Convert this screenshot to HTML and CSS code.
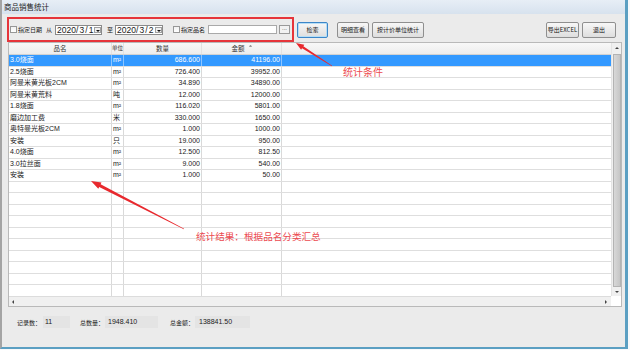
FILE: index.html
```html
<!DOCTYPE html>
<html lang="zh-CN">
<head>
    <meta charset="UTF-8">
    <title>商品销售统计</title>
    <link rel="stylesheet" href="styles.css">
</head>
<body>
<div class="screen">
    <div class="window">
        <div class="titlebar">商品销售统计</div>
        <div class="content">
            <!-- 查询条件 -->
            <div class="toolbar">
                <div class="filter">
                    <span class="check"></span>
                    <span class="lbl l1">指定日期</span>
                    <span class="lbl l2">从</span>
                    <div class="combo c1"><span class="combo-text">2020/ 3 / 1</span><span class="combo-btn"></span></div>
                    <span class="lbl l3">至</span>
                    <div class="combo c2"><span class="combo-text">2020/ 3 / 2</span><span class="combo-btn"></span></div>
                    <span class="check ch2"></span>
                    <span class="lbl l1">指定品名</span>
                    <span class="textbox"></span>
                    <span class="dots">...</span>
                </div>
                <button class="btn default b-search">检索</button>
                <button class="btn b-detail">明细查看</button>
                <button class="btn b-unit">按计价单位统计</button>
                <button class="btn b-excel">导出EXCEL</button>
                <button class="btn b-exit">退出</button>
            </div>

            <!-- 统计结果表格 -->
            <div class="grid">
                <div class="grid-main">
                    <div class="grid-view">
                        <div class="row head">
                            <div class="cell">品名</div>
                            <div class="cell unit">单位</div>
                            <div class="cell">数量</div>
                            <div class="cell">金额<span class="sort"></span></div>
                            <div class="cell"></div>
                        </div>
                        <div class="row sel">
                            <div class="cell">3.0烧面</div><div class="cell">m²</div><div class="cell num">686.600</div><div class="cell num">41196.00</div><div class="cell"></div>
                        </div>
                        <div class="row">
                            <div class="cell">2.5烧面</div><div class="cell">m²</div><div class="cell num">726.400</div><div class="cell num">39952.00</div><div class="cell"></div>
                        </div>
                        <div class="row">
                            <div class="cell">阿曼米黄光板2CM</div><div class="cell">m²</div><div class="cell num">34.890</div><div class="cell num">34890.00</div><div class="cell"></div>
                        </div>
                        <div class="row">
                            <div class="cell">阿曼米黄荒料</div><div class="cell">吨</div><div class="cell num">12.000</div><div class="cell num">12000.00</div><div class="cell"></div>
                        </div>
                        <div class="row">
                            <div class="cell">1.8烧面</div><div class="cell">m²</div><div class="cell num">116.020</div><div class="cell num">5801.00</div><div class="cell"></div>
                        </div>
                        <div class="row">
                            <div class="cell">磨边加工费</div><div class="cell">米</div><div class="cell num">330.000</div><div class="cell num">1650.00</div><div class="cell"></div>
                        </div>
                        <div class="row">
                            <div class="cell">奥特曼光板2CM</div><div class="cell">m²</div><div class="cell num">1.000</div><div class="cell num">1000.00</div><div class="cell"></div>
                        </div>
                        <div class="row">
                            <div class="cell">安装</div><div class="cell">只</div><div class="cell num">19.000</div><div class="cell num">950.00</div><div class="cell"></div>
                        </div>
                        <div class="row">
                            <div class="cell">4.0烧面</div><div class="cell">m²</div><div class="cell num">12.500</div><div class="cell num">812.50</div><div class="cell"></div>
                        </div>
                        <div class="row">
                            <div class="cell">3.0拉丝面</div><div class="cell">m²</div><div class="cell num">9.000</div><div class="cell num">540.00</div><div class="cell"></div>
                        </div>
                        <div class="row">
                            <div class="cell">安装</div><div class="cell">m²</div><div class="cell num">1.000</div><div class="cell num">50.00</div><div class="cell"></div>
                        </div>
                        <div class="row"><div class="cell"></div><div class="cell"></div><div class="cell"></div><div class="cell"></div><div class="cell"></div></div>
                        <div class="row"><div class="cell"></div><div class="cell"></div><div class="cell"></div><div class="cell"></div><div class="cell"></div></div>
                        <div class="row"><div class="cell"></div><div class="cell"></div><div class="cell"></div><div class="cell"></div><div class="cell"></div></div>
                        <div class="row"><div class="cell"></div><div class="cell"></div><div class="cell"></div><div class="cell"></div><div class="cell"></div></div>
                        <div class="row"><div class="cell"></div><div class="cell"></div><div class="cell"></div><div class="cell"></div><div class="cell"></div></div>
                        <div class="row"><div class="cell"></div><div class="cell"></div><div class="cell"></div><div class="cell"></div><div class="cell"></div></div>
                        <div class="row"><div class="cell"></div><div class="cell"></div><div class="cell"></div><div class="cell"></div><div class="cell"></div></div>
                        <div class="row"><div class="cell"></div><div class="cell"></div><div class="cell"></div><div class="cell"></div><div class="cell"></div></div>
                        <div class="row"><div class="cell"></div><div class="cell"></div><div class="cell"></div><div class="cell"></div><div class="cell"></div></div>
                        <div class="row"><div class="cell"></div><div class="cell"></div><div class="cell"></div><div class="cell"></div><div class="cell"></div></div>
                    </div>
                    <div class="vscroll">
                        <span class="arrow up"></span>
                        <span class="thumb"></span>
                        <span class="arrow down"></span>
                    </div>
                </div>
                <div class="hbar">
                    <div class="hscroll">
                        <span class="arrow left"></span>
                        <span class="arrow right"></span>
                    </div>
                    <div class="corner"></div>
                </div>
            </div>

            <!-- 合计 -->
            <div class="footer">
                <span class="flbl">记录数：</span><span class="val v1">11</span>
                <span class="flbl f2">总数量：</span><span class="val v2">1948.410</span>
                <span class="flbl f3">总金额：</span><span class="val v3">138841.50</span>
            </div>
        </div>
    </div>

    <!-- 标注 -->
    <svg class="marks" width="630" height="350" viewBox="0 0 630 350">
        <polygon points="296,43 304.3,44.8 303.35,46.3 332.16,65.75 331.84,66.25 302.05,48.3 301.1,49.8" />
        <polygon points="91,181 101.5,182.5 100.6,184.3 184.14,228.73 183.86,229.27 99.2,186.9 98.3,188.7" />
    </svg>
    <div class="note n1">统计条件</div>
    <div class="note n2">统计结果：根据品名分类汇总</div>
</div>
</body>
</html>
```

FILE: styles.css
```css
* {
    box-sizing: border-box;
}

body {
    margin: 0;
    background-color: #f7f9fb;
    font-family: "Liberation Sans", "Noto Sans CJK SC", sans-serif;
    color: #1a1a1a;
}

.screen {
    position: relative;
    width: 630px;
    height: 350px;
    overflow: hidden;
}

.window {
    width: 628px;
    height: 349px;
    background-color: #ebebeb;
    border-left: 2px solid #a4a4a4;
    border-right: 3px solid #5b9fc2;
    border-bottom: 2px solid #5b9fc2;
    display: flex;
    flex-direction: column;
}

.titlebar {
    height: 14px;
    line-height: 15px;
    padding-left: 2px;
    font-size: 7.5px;
    color: #222;
    background: linear-gradient(#e7eef6, #d7e2ee);
}

.content {
    padding: 3px 3px 0 5px;
}

/* 工具栏 */
.toolbar {
    display: flex;
    align-items: center;
    height: 25px;
}

.filter {
    width: 287px;
    height: 25px;
    border: 2px solid #e6353b;
    display: flex;
    align-items: center;
    padding-left: 1px;
}

.check {
    width: 7px;
    height: 7px;
    border: 1px solid #979797;
    background: linear-gradient(#f2f2f2, #ffffff);
    flex: none;
}

.ch2 {
    margin-left: 10px;
}

.lbl {
    font-size: 6px;
    white-space: nowrap;
    flex: none;
}

.l1 { margin-left: 1px; width: 24px; }
.l2 { margin-left: 4px; width: 6px; }
.l3 { margin-left: 5px; width: 6px; }

.combo {
    display: flex;
    height: 10px;
    background-color: #fff;
    border: 1px solid #8a8a8a;
    flex: none;
}

.c1 { margin-left: 3px; width: 47px; }
.c2 { margin-left: 2px; width: 48px; }

.combo-text {
    flex: 1;
    overflow: hidden;
    white-space: nowrap;
    font-size: 8.5px;
    line-height: 8px;
    word-spacing: -1.2px;
    padding-left: 1px;
}

.combo-btn {
    width: 7px;
    margin: 1px 0;
    border: 1px solid #a0a0a0;
    background: #f0f0f0;
    position: relative;
    flex: none;
}

.combo-btn::after {
    content: "";
    position: absolute;
    left: 1px;
    top: 2px;
    border-left: 2px solid transparent;
    border-right: 2px solid transparent;
    border-top: 2px solid #111;
}

.textbox {
    margin-left: 3px;
    width: 69px;
    height: 9px;
    background-color: #fff;
    border: 1px solid #a9a9a9;
    flex: none;
}

.dots {
    margin-left: 2px;
    width: 11px;
    height: 9px;
    border: 1px solid #9a9a9a;
    background: #f2f2f2;
    font-size: 6px;
    line-height: 5px;
    text-align: center;
    color: #333;
    flex: none;
}

.btn {
    height: 16px;
    padding: 0;
    border: 1px solid #8f8f8f;
    border-radius: 2px;
    background: linear-gradient(#f7f7f7, #dedede);
    font-family: "Noto Sans CJK SC", "Liberation Sans", sans-serif;
    font-size: 6px;
    color: #1a1a1a;
    flex: none;
}

.btn.default {
    border-color: #3c86c8;
    box-shadow: inset 0 0 0 1px #b6def6;
}

.b-search { margin-left: 3px; width: 31px; }
.b-detail { margin-left: 9px; width: 32px; }
.b-unit { margin-left: 3px; width: 52px; }
.b-excel { margin-left: auto; width: 33px; }
.b-exit { margin-left: 3px; width: 34px; margin-right: 6px; }

/* 表格 */
.grid {
    margin-left: 1px;
    width: 614px;
    height: 265px;
    border: 1px solid #b9b9b9;
    background-color: #fff;
    display: flex;
    flex-direction: column;
}

.grid-main {
    display: flex;
    height: 253px;
}

.grid-view {
    flex: 1;
    overflow: hidden;
}

.row {
    display: grid;
    grid-template-columns: 103px 12px 78px 80px 1fr;
    height: 11.5px;
    border-bottom: 1px solid #dedede;
    font-size: 7px;
}

.row.head {
    height: 12px;
    background: linear-gradient(#f8f8f8, #ededed);
    border-bottom: 1px solid #d2d2d2;
    font-size: 6.5px;
    color: #333;
}

.cell {
    border-right: 1px solid #d9d9d9;
    padding: 0 1px;
    line-height: 10.5px;
    white-space: nowrap;
    overflow: hidden;
}

.cell:last-child {
    border-right: none;
}

.head .cell {
    text-align: center;
    line-height: 11px;
    border-right-color: #e2e2e2;
}

.head .unit {
    padding: 0;
    font-size: 5.5px;
}

.num {
    text-align: right;
}

.row.sel {
    background-color: #3399ff;
    color: #fff;
}

.row.sel .cell {
    border-right-color: #8cc4ff;
}

.sort {
    display: inline-block;
    width: 3px;
    height: 2px;
    margin-left: 4px;
    vertical-align: 4px;
    border-left: 1.5px solid transparent;
    border-right: 1.5px solid transparent;
    border-bottom: 2px solid #9a9a9a;
}

.vscroll {
    width: 10px;
    background-color: #f0f0f0;
    border-left: 1px solid #e4e4e4;
    display: flex;
    flex-direction: column;
    align-items: center;
}

.arrow {
    width: 0;
    height: 0;
    flex: none;
}

.arrow.up {
    margin: 4px 0 5px;
    border-left: 2px solid transparent;
    border-right: 2px solid transparent;
    border-bottom: 2px solid #444;
}

.arrow.down {
    margin: 4px 0 3px;
    border-left: 2px solid transparent;
    border-right: 2px solid transparent;
    border-top: 2px solid #444;
}

.thumb {
    flex: 1;
    width: 8px;
    background: linear-gradient(to right, #d8d8d8, #c6c6c6);
    border: 1px solid #b3b3b3;
}

.hbar {
    display: flex;
    height: 10px;
}

.hscroll {
    flex: 1;
    background-color: #f0f0f0;
    border-top: 1px solid #dcdcdc;
    display: flex;
    align-items: center;
    justify-content: space-between;
    padding: 0 4px 0 3px;
}

.arrow.left {
    border-top: 2px solid transparent;
    border-bottom: 2px solid transparent;
    border-right: 2px solid #444;
}

.arrow.right {
    border-top: 2px solid transparent;
    border-bottom: 2px solid transparent;
    border-left: 2px solid #444;
}

.corner {
    width: 10px;
    background-color: #fff;
}

/* 合计栏 */
.footer {
    display: flex;
    align-items: center;
    margin-top: 9px;
    height: 12px;
    padding-left: 10px;
}

.flbl {
    font-size: 6px;
    width: 26px;
    white-space: nowrap;
}

.f2 { margin-left: 10px; width: 25px; }
.f3 { margin-left: 12px; width: 25px; }

.val {
    height: 12px;
    line-height: 12px;
    background-color: #e4e4e4;
    font-size: 7px;
    padding-left: 2px;
}

.v1 { width: 27px; }
.v2 { width: 53px; padding-left: 3px; }
.v3 { width: 55px; padding-left: 4px; }

/* 标注 */
.marks {
    position: absolute;
    left: 0;
    top: 0;
    fill: #e8292e;
}

.note {
    position: absolute;
    font-family: "Noto Sans CJK SC", sans-serif;
    font-size: 10px;
    line-height: 12px;
    color: #ec4a50;
    white-space: nowrap;
}

.n1 { left: 343px; top: 66px; }
.n2 { left: 196px; top: 230px; font-size: 9.6px; }
```
